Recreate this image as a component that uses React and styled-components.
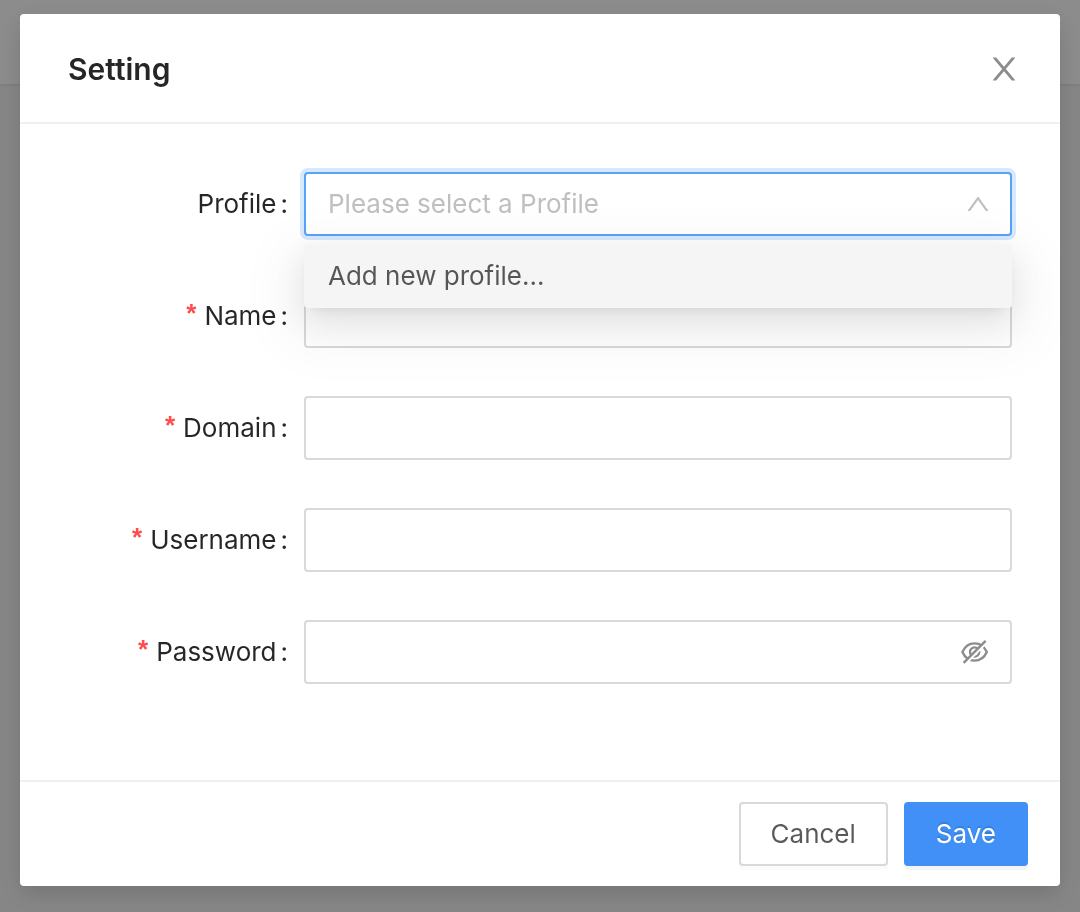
import React from 'react';
import styled, { createGlobalStyle, css } from 'styled-components';

const GlobalStyle = createGlobalStyle`
  *, *::before, *::after {
    box-sizing: border-box;
  }
  body {
    margin: 0;
    background: #f5f5f5;
    color: rgba(0, 0, 0, 0.85);
    font-family: Inter, "Liberation Sans", sans-serif;
    font-size: 26px;
    line-height: 44px;
  }
  button, input, select {
    font: inherit;
  }
`;

const Page = styled.div`
  min-height: 100vh;
`;

const TopBar = styled.div`
  height: 84px;
  background: #ffffff;
  box-shadow: 0 2px 2px rgba(0, 0, 0, 0.06);
`;

const Mask = styled.div`
  position: fixed;
  inset: 0;
  overflow: auto;
  padding: 14px 20px 26px;
  background: rgba(0, 0, 0, 0.45);
`;

const Dialog = styled.section`
  max-width: 1040px;
  margin: 0 auto;
  background: #ffffff;
  border-radius: 4px;
  box-shadow: 0 8px 24px rgba(0, 0, 0, 0.15);
`;

const DialogHeader = styled.header`
  display: flex;
  align-items: center;
  justify-content: space-between;
  padding: 33px 38px 31px 48px;
  border-bottom: 2px solid #f0f0f0;
`;

const Title = styled.h1`
  margin: 0;
  font-size: 30px;
  font-weight: 600;
  line-height: 44px;
`;

const iconButton = css`
  display: flex;
  padding: 0;
  border: 0;
  background: none;
  color: rgba(0, 0, 0, 0.45);
  cursor: pointer;
`;

const CloseButton = styled.button`
  ${iconButton}
  font-size: 36px;
`;

const Fields = styled.div`
  display: flex;
  flex-direction: column;
  gap: 48px;
  padding: 48px 48px 96px;
`;

const Field = styled.div`
  display: grid;
  grid-template-columns: 1fr 3fr;
  align-items: center;
`;

const Label = styled.label`
  display: flex;
  justify-content: flex-end;
  align-items: flex-start;
  padding-right: 16px;

  &::after {
    content: ":";
    margin-left: 4px;
  }
`;

const Required = styled.span`
  margin-right: 8px;
  font-family: "Liberation Sans", sans-serif;
  font-weight: 700;
  line-height: 38px;
  color: #ff4d4f;
`;

const Control = styled.div`
  position: relative;
  display: flex;
  align-items: center;
  min-width: 0;
  height: 64px;
  border: 2px solid ${(p) => (p.$focused ? '#57a3f8' : '#d9d9d9')};
  border-radius: 4px;
  background: #ffffff;
  ${(p) => p.$focused && 'box-shadow: 0 0 0 4px rgba(64, 144, 247, 0.2);'}
`;

const fieldText = css`
  flex: 1;
  min-width: 0;
  height: 100%;
  padding: 0 22px;
  border: 0;
  outline: 0;
  background: transparent;
`;

const Input = styled.input`
  ${fieldText}
  color: inherit;
`;

const Select = styled.select`
  ${fieldText}
  appearance: none;
  color: #bfbfbf;
`;

const Icon = styled.svg`
  width: 1em;
  height: 1em;
  fill: currentColor;
`;

const ArrowIcon = styled(Icon)`
  margin-right: 18px;
  font-size: 28px;
  color: #bfbfbf;
  pointer-events: none;
`;

const RevealButton = styled.button`
  ${iconButton}
  margin-right: 20px;
`;

const EyeIcon = styled.svg`
  width: 30px;
  height: 26px;
  fill: none;
  stroke: #8c8c8c;
  stroke-width: 2.4;
`;

const Menu = styled.ul`
  position: absolute;
  z-index: 1;
  top: calc(100% + 10px);
  left: -2px;
  right: -2px;
  margin: 0;
  padding: 0;
  list-style: none;
  border-radius: 4px;
  background: #f5f5f5;
  box-shadow:
    0 6px 12px -8px rgba(0, 0, 0, 0.12),
    0 12px 32px rgba(0, 0, 0, 0.08),
    0 18px 56px 16px rgba(0, 0, 0, 0.05);
`;

const MenuItem = styled.li`
  padding: 10px 24px;
  color: rgba(0, 0, 0, 0.65);
`;

const DialogFooter = styled.footer`
  display: flex;
  justify-content: flex-end;
  gap: 16px;
  padding: 20px 32px;
  border-top: 2px solid #f0f0f0;
`;

const Button = styled.button`
  height: 64px;
  padding: 0 30px;
  border: 2px solid ${(p) => (p.$primary ? '#4090f7' : '#d9d9d9')};
  border-radius: 4px;
  background: ${(p) => (p.$primary ? '#4090f7' : '#ffffff')};
  color: ${(p) => (p.$primary ? '#ffffff' : 'rgba(0, 0, 0, 0.65)')};
  box-shadow: 0 4px 0 rgba(0, 0, 0, ${(p) => (p.$primary ? 0.045 : 0.016)});
  text-shadow: ${(p) => (p.$primary ? '0 -2px 0 rgba(0, 0, 0, 0.12)' : 'none')};
  cursor: pointer;
`;

const textFields = [
  { id: 'name', label: 'Name' },
  { id: 'domain', label: 'Domain' },
  { id: 'username', label: 'Username' },
  { id: 'password', label: 'Password', secret: true },
];

export default function App() {
  return (
    <>
      <GlobalStyle />
      <Page>
        <TopBar />
      </Page>
      <Mask>
        <Dialog role="dialog" aria-modal="true" aria-labelledby="dialog-title">
          <DialogHeader>
            <Title id="dialog-title">Setting</Title>
            <CloseButton type="button" aria-label="Close">
              <Icon viewBox="0 0 1024 1024" aria-hidden="true">
                <path d="M563.8 512l262.5-312.9c4.4-5.2.7-13.1-6.1-13.1h-79.8c-4.7 0-9.2 2.1-12.3 5.7L511.6 449.8 295.1 191.7c-3-3.6-7.5-5.7-12.3-5.7H203c-6.8 0-10.5 7.9-6.1 13.1L459.4 512 196.9 824.9A7.95 7.95 0 0 0 203 838h79.8c4.7 0 9.2-2.1 12.3-5.7l216.5-258.1 216.5 258.1c3 3.6 7.5 5.7 12.3 5.7h79.8c6.8 0 10.5-7.9 6.1-13.1L563.8 512z" />
              </Icon>
            </CloseButton>
          </DialogHeader>
          <form>
            <Fields>
              <Field>
                <Label htmlFor="profile">Profile</Label>
                <Control $focused>
                  <Select id="profile" defaultValue="">
                    <option value="">Please select a Profile</option>
                  </Select>
                  <ArrowIcon viewBox="0 0 1024 1024" aria-hidden="true">
                    <path d="M890.5 755.3L537.9 269.2c-12.8-17.6-39-17.6-51.7 0L133.5 755.3A8 8 0 0 0 140 768h75c5.1 0 9.9-2.5 12.9-6.6L512 369.8l284.1 391.6c3 4.1 7.8 6.6 12.9 6.6h75c6.5 0 10.3-7.4 6.5-12.7z" />
                  </ArrowIcon>
                  <Menu>
                    <MenuItem>Add new profile...</MenuItem>
                  </Menu>
                </Control>
              </Field>
              {textFields.map(({ id, label, secret }) => (
                <Field key={id}>
                  <Label htmlFor={id}>
                    <Required>*</Required>
                    {label}
                  </Label>
                  <Control>
                    <Input id={id} type={secret ? 'password' : 'text'} />
                    {secret && (
                      <RevealButton type="button" aria-label="Show password">
                        <EyeIcon viewBox="0 0 30 26" aria-hidden="true">
                          <path d="M2.4 13C5 7.2 9.3 4.4 14.6 4.4S24.2 7.2 26.8 13C24.2 18.8 19.9 21.6 14.6 21.6S5 18.8 2.4 13Z" />
                          <circle cx="14.6" cy="13" r="4.6" />
                          <path d="M5 25.2L27 3.2" stroke="#ffffff" />
                          <path d="M3.6 23.8L25.6 1.8" />
                        </EyeIcon>
                      </RevealButton>
                    )}
                  </Control>
                </Field>
              ))}
            </Fields>
            <DialogFooter>
              <Button type="button">Cancel</Button>
              <Button type="submit" $primary>Save</Button>
            </DialogFooter>
          </form>
        </Dialog>
      </Mask>
    </>
  );
}
